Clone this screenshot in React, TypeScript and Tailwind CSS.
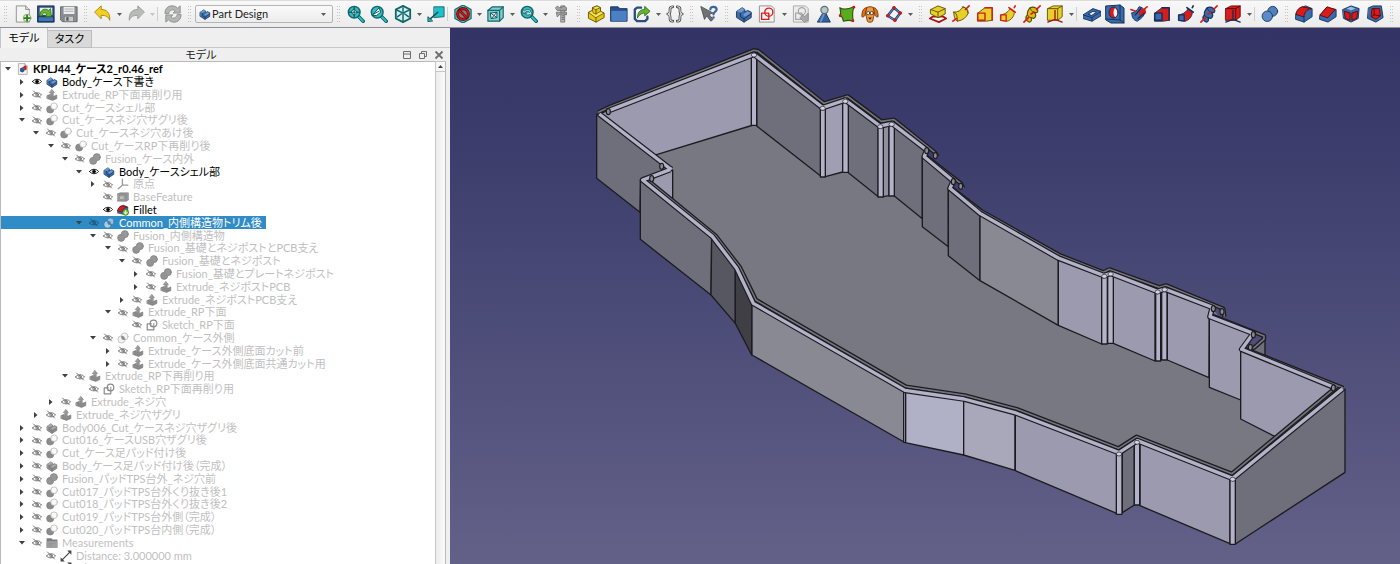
import React, { useState } from 'react';

const INK = '#1c1c20';

/* ---------- toolbar icons ---------- */

const Svg: React.FC<{ children: React.ReactNode; className?: string }> = ({ children, className = 'size-[18px]' }) => (
    <svg className={`shrink-0 ${className}`} viewBox="0 0 20 20" fill="none" strokeLinejoin="round" strokeLinecap="round" aria-hidden="true">
        {children}
    </svg>
);

const Page: React.FC = () => (
    <>
        <path d="M3 1h10l4 4v14H3z" fill="#f4f5f3" stroke="#8a8c88" />
        <path d="M13 1v4h4" fill="#d8d9d6" stroke="#8a8c88" />
    </>
);

const NewIcon = () => (
    <Svg>
        <Page />
        <circle cx="14.5" cy="14.5" r="4.2" fill="#dcebd2" stroke="#5a8a45" strokeWidth=".7" />
        <path d="M14.5 11.5v6M11.5 14.5h6" stroke="#2f7d1c" strokeWidth="2" />
    </Svg>
);

const OpenIcon = () => (
    <Svg>
        <path d="M1 1h18v18H1z" fill="#2a4d80" stroke="#16315a" />
        <path d="M3 3h14v8H3z" fill="#e8ecef" />
        <path d="M1.500 13h17v5.500h-17z" fill="#3f75b5" stroke="#16315a" />
        <path d="M3 12c0-7 6-9 10-6l2-2 1 9H9l2-3C8 7.500 6 9 6 12z" fill="#63b82d" stroke="#2c5e12" strokeWidth=".8" />
    </Svg>
);

const SaveIcon = () => (
    <Svg>
        <path d="M1 2h18v16.500H3L1 17z" fill="#8b8f92" stroke="#5f6366" />
        <path d="M4 2h12v8H4z" fill="#eceded" />
        <path d="M5.500 4.500h9M5.500 7h9" stroke="#a9abad" />
        <path d="M5 12.500h10v6H5z" fill="#c7c9ca" stroke="#6d7073" strokeWidth=".7" />
        <path d="M7 13.500h2.500v4H7z" fill="#55585b" />
    </Svg>
);

const UndoIcon = () => (
    <Svg>
        <path d="M1 7.500 8 1v4c6 0 10 3.500 9.500 12-1.500-4-4-5.500-9.500-5.500v3.500z" fill="#f2cf25" stroke="#a88207" />
    </Svg>
);

const RedoIcon = () => (
    <Svg>
        <path d="M19 7.500 12 1v4C6 5 2 8.500 2.500 17c1.500-4 4-5.500 9.500-5.500v3.500z" fill="#b9bbb9" stroke="#969896" />
    </Svg>
);

const RefreshIcon = () => (
    <Svg>
        <path d="M1 9c0-9 10-10 14-5.500L18 1v8h-8l2.500-2.500C10 4.500 6 5.500 5.500 9z" fill="#b4b6b4" stroke="#8c8e8c" />
        <path d="M19 11c0 9-10 10-14 5.500L2 19v-8h8l-2.500 2.500c2.500 2 6.500 1 7-2.500z" fill="#b4b6b4" stroke="#8c8e8c" />
    </Svg>
);

const Magnifier: React.FC<{ children?: React.ReactNode }> = ({ children }) => (
    <Svg>
        <path d="m12 12 6 6" stroke="#0e5d62" strokeWidth="4" />
        <path d="m12.500 12.500 5.300 5.300" stroke="#22c3cb" strokeWidth="2" />
        <circle cx="8" cy="8" r="6.500" fill="#33bcc3" stroke="#12686c" strokeWidth="1.600" />
        {children}
    </Svg>
);

const FitAllIcon = () => (
    <Magnifier>
        <path d="M8 2.500v11M2.500 8h11" stroke="#0b4b4e" strokeWidth="1.200" />
        <path d="M8 4.500 11.500 8 8 11.500 4.500 8z" fill="#dff7f8" stroke="#0b4b4e" />
        <path d="M8 5v6M5 8h6" stroke="#0b4b4e" />
    </Magnifier>
);

const FitSelectionIcon = () => (
    <Magnifier>
        <path d="m3 11 7-8 2 5-4.500 3.500z" fill="#e6f7f7" stroke="#0b4b4e" />
        <path d="m4 10 6-3" stroke="#0b4b4e" />
    </Magnifier>
);

const ZoomIcon = () => (
    <Magnifier>
        <path d="M3 8.500V5l2 1.500c2-2 5-2 7 0L10.500 8C9 6.500 7 7 6 8l1 1zM13 8v4l-2-1.500c-2 1-4 1-6-1" fill="#c5e9ea" stroke="#0b4b4e" strokeWidth=".8" />
    </Magnifier>
);

const IsoIcon = () => (
    <Svg>
        <path d="m10 1 8 4v10l-8 4-8-4V5z" fill="#d4eeee" stroke="#0f666a" strokeWidth="2" />
        <path d="m2 5 8 4 8-4M10 9v10M10 3v4M4 13l4-3M16 13l-4-3" stroke="#0f666a" strokeWidth="1.600" />
    </Svg>
);

const AlignViewIcon = () => (
    <Svg>
        <path d="M8 2h11v11l-11 1z" fill="#1fc0ca" stroke="#12686c" />
        <path d="m12 8-9 8" stroke="#0d4f53" strokeWidth="1.600" />
        <path d="M1 18v-5l5 4.500z" fill="#1fc0ca" stroke="#0d4f53" />
    </Svg>
);

const NoSignIcon = () => (
    <Svg>
        <path d="m10 0 9 5v10l-9 5-9-5V5z" fill="#5cc4c8" stroke="#12686c" strokeWidth="1.300" />
        <circle cx="10" cy="10" r="6" fill="#7d8282" stroke="#5e0808" strokeWidth="3.400" />
        <circle cx="10" cy="10" r="6" stroke="#c81414" strokeWidth="2" />
        <path d="m6 6 8 8" stroke="#5e0808" strokeWidth="3" />
        <path d="m6 6 8 8" stroke="#d81414" strokeWidth="1.600" />
    </Svg>
);

const BoundIcon = () => (
    <Svg>
        <path d="m1 6 5-4h12v12l-4 4H1z" fill="#82cdd0" stroke="#12686c" strokeWidth="1.300" />
        <path d="M1 6h13v12M14 6l4-4" stroke="#12686c" strokeWidth="1.300" />
        <path d="m4 9 7-1v6l-6 1zM4 9l7 5M11 8l-6 7" fill="#e7f6f6" stroke="#0b4b4e" />
    </Svg>
);

const CaliperIcon = () => (
    <Svg>
        <path d="M9 1h4v18H9z" fill="#b7b9b7" stroke="#6b6d6b" strokeWidth=".9" />
        <path d="M3 3l2-2 2 2h3l2-2 3 2v3H5zM4 8h11v3l-3-1H8l-3 3z" fill="#a1a3a1" stroke="#6b6d6b" strokeWidth=".9" />
        <path d="M10 12h2M10 14h2M10 16h2" stroke="#555" strokeWidth=".8" />
    </Svg>
);

const PartIcon = () => (
    <Svg>
        <path d="M2 8l4-2V3l5-2 4 2v4l4 2v5l-9 5-8-4z" fill="#e5c816" stroke="#5d4f02" />
        <path d="m6 3 5-2 4 2-5 2z" fill="#f7e455" stroke="#5d4f02" strokeWidth=".8" />
        <path d="m2 8 4-2 1 3 3 1 5-3 4 2-9 5z" fill="#f7e455" stroke="#5d4f02" strokeWidth=".8" />
        <path d="M10 5v5M10 14v5" stroke="#5d4f02" />
    </Svg>
);

const FolderIcon = () => (
    <Svg>
        <path d="M1 2h8l2 2h8v14H1z" fill="#28508c" stroke="#1a3765" />
        <path d="M1.500 6.500h17v11.200h-17z" fill="#4b80c2" />
    </Svg>
);

const ShareIcon = () => (
    <Svg>
        <path d="M9 3H4.500L2 5v10.500L4.500 18h9l2.500-2.500V13" stroke="#2b4e80" strokeWidth="2.600" />
        <path d="M5 14c0-7 4-9 8-9V1.500L19 7l-6 5V9c-3 0-5 1-8 5z" fill="#62b82b" stroke="#2c5e12" strokeWidth=".9" />
    </Svg>
);

const BracesIcon = () => (
    <Svg>
        <path d="M7.500 2C4 2 4.500 4 4.500 6.500S4 10 2 10c2 0 2.500 1 2.500 3.500S4 18 7.500 18M12.500 2c3.500 0 3 2 3 4.500s.5 3.500 2.500 3.500c-2 0-2.500 1-2.500 3.500s.5 4.500-3 4.500" stroke="#3b3e40" strokeWidth="3" />
        <path d="M7.500 2C4 2 4.500 4 4.500 6.500S4 10 2 10c2 0 2.500 1 2.500 3.500S4 18 7.500 18M12.500 2c3.500 0 3 2 3 4.500s.5 3.500 2.500 3.500c-2 0-2.500 1-2.500 3.500s.5 4.500-3 4.500" stroke="#e8e8e8" strokeWidth="1.200" />
    </Svg>
);

const WhatsThisIcon = () => (
    <Svg>
        <path d="m1 2 4 14 2.500-4L12 18l2.500-2L10 10.500l4-1.500z" fill="#6f7375" stroke="#4e5153" />
        <path d="M11.500 5c0-4 7-4 7 0 0 2.500-3.500 2.500-3.500 5.500" stroke="#3a669f" strokeWidth="2.400" />
        <circle cx="15" cy="14" r="1.400" fill="#3a669f" />
    </Svg>
);

const BodyShape: React.FC<{ grey?: boolean }> = ({ grey }) => (
    <>
        <path d="m2 7 6-4 3 2v3l3-2 4 2v6l-8 5-8-5z" fill={grey ? '#8e8e8e' : '#3c6ca8'} stroke={grey ? '#707070' : '#122f57'} />
        <path d="m2 7 6-4 3 2-5 3.500zM9 10.500 14 7l4 2-7 4z" fill={grey ? '#acacac' : '#6d9bd2'} />
        <path d="M6 9v4l4 2.500 8-6M10 15v4" stroke={grey ? '#707070' : '#122f57'} />
    </>
);

const BodyIcon = () => <Svg><BodyShape /></Svg>;

const SketchIcon = () => (
    <Svg>
        <path d="M2 1h13l3 3v15H2z" fill="#f4f5f3" stroke="#8a8c88" />
        <path d="M4 9h8v7H4z" stroke="#dc1d1d" strokeWidth="1.500" />
        <circle cx="12" cy="8" r="4.500" stroke="#dc1d1d" strokeWidth="1.500" />
    </Svg>
);

const MapSketchIcon = () => (
    <Svg>
        <path d="M2 1h13l3 3v15H2z" fill="#ececec" stroke="#a5a5a5" />
        <circle cx="11" cy="7" r="4" stroke="#a5a5a5" strokeWidth="1.300" />
        <path d="M4 9h7v7H4z" stroke="#a5a5a5" strokeWidth="1.300" />
        <path d="m9 14 3-3 2 2 4-4v8l-4 2z" fill="#a8a8a8" stroke="#8f8f8f" />
    </Svg>
);

const CloneIcon = () => (
    <Svg>
        <path d="M9 9h3l5 10H3z" fill="#33639f" stroke="#16315a" />
        <path d="M10 10 6.500 18" stroke="#6b97cc" strokeWidth="2" />
        <circle cx="10.500" cy="5.500" r="4" fill="#b9c6c9" stroke="#5e6d73" strokeWidth="1.300" />
    </Svg>
);

const BinderIcon = () => (
    <Svg>
        <path d="M2 3c4 3 9 2 16-1-3 6-2 11-1 16-5-2-8-1-11 0-1-4-1-5-4-6 2-3 1-5 0-9z" fill="#59ac20" stroke="#2a590d" strokeWidth="1.300" />
        <circle cx="17.500" cy="2.500" r="1.600" fill="#d21717" />
        <circle cx="16.500" cy="17.500" r="1.600" fill="#d21717" />
        <circle cx="2.500" cy="12" r="1.600" fill="#d21717" />
    </Svg>
);

const DogIcon = () => (
    <Svg>
        <path d="M6 3c2-1.500 6-1.500 8 0l1 6-1 4-1 5c-1 1.500-5 1.500-6 0l-1-5-1-4z" fill="#f09a3c" stroke="#71370a" />
        <path d="M6 3C2 3 1 8 1 13c2 1 4-1 4-4zM14 3c4 0 5 5 5 10-2 1-4-1-4-4z" fill="#e0730f" stroke="#71370a" />
        <circle cx="8" cy="9" r="1.800" fill="#fff" stroke="#222" strokeWidth=".8" />
        <circle cx="12" cy="9" r="1.800" fill="#fff" stroke="#222" strokeWidth=".8" />
        <path d="M8 14h4l-2 2.500z" fill="#2b1a0c" />
    </Svg>
);

const DatumIcon = () => (
    <Svg>
        <path d="m3 12 7-9 7 6-6 8z" stroke="#17345f" strokeWidth="2.800" />
        <path d="m3 12 7-9 7 6-6 8z" stroke="#5b8bc4" strokeWidth="1.200" />
        {[[3, 12], [10, 3], [17, 9], [11, 17]].map(([x, y]) => <circle key={x} cx={x} cy={y} r="2" fill="#d21717" />)}
    </Svg>
);

const YEL = '#e8cf2a';
const BLU = '#3a6cab';
const RED = '#d81b1b';
const NAVY = '#14305a';

const PadIcon = () => (
    <Svg>
        <path d="m1 15 3-2h12l3 2-8 4z" fill="#fff" stroke="#a31515" strokeWidth="2" />
        <path d="m2 5 8-4 8 3v6l-8 4-8-4z" fill={YEL} stroke="#5d4f02" />
        <path d="m2 5 8 3 8-4M10 8v6" stroke="#5d4f02" />
    </Svg>
);

const RevolutionIcon = () => (
    <Svg>
        <path d="M2 8c5 0 8-2 10-6 4 1 6 3 6 7-2 5-6 8-12 9-3-2-4-5-4-10z" fill={YEL} stroke="#5d4f02" />
        <path d="M2 8c3 1 4 4 4 10M12 2c3 1 5 3 6 7" stroke="#5d4f02" />
        <path d="m1 18 4-3M15 5l4-4" stroke={RED} strokeWidth="1.800" />
    </Svg>
);

const LoftIcon: React.FC<{ sub?: boolean }> = ({ sub }) => (
    <Svg>
        <path d="m2 9 8-6h8v14l-7 1H2z" fill={sub ? RED : YEL} stroke={sub ? NAVY : '#5d4f02'} />
        <path d="M2 9h8v8H2z" fill={sub ? BLU : YEL} stroke={sub ? NAVY : RED} strokeWidth="1.600" />
        <path d="M10 3h8v14" stroke={sub ? NAVY : RED} strokeWidth="1.600" />
    </Svg>
);

const PipeIcon: React.FC<{ sub?: boolean }> = ({ sub }) => (
    <Svg>
        <path d="M2 11C8 10 11 7 12 4l5 4c0 5-4 9-8 10l-7-1z" fill={sub ? RED : YEL} stroke={sub ? NAVY : '#5d4f02'} />
        <path d="M2 11h6v7l-6-1z" fill={sub ? BLU : YEL} stroke={sub ? NAVY : RED} strokeWidth="1.400" />
        <path d="m11 3 7 5M17 3l1-2" stroke={sub ? NAVY : RED} strokeWidth="1.800" />
    </Svg>
);

const HelixIcon: React.FC<{ sub?: boolean }> = ({ sub }) => (
    <Svg>
        <path d="M8 3c4-2 10 1 8 5-1 1-3 0-4 0 3 2 3 5 0 7-1 0-2-1-3-1 1 3 0 5-2 5-4-1-5-6-2-8-1-2 1-6 3-8z" fill={sub ? BLU : '#d9bb14'} stroke={sub ? NAVY : '#5d4f02'} strokeWidth="1.300" />
        <path d="M8 3c0 2 2 4 4 5M5 11c1 2 2 3 4 3" stroke={sub ? NAVY : '#5d4f02'} />
        <path d="m1 19 5-5M9 10l3-2M15 5l4-4" stroke={RED} strokeWidth="1.800" />
    </Svg>
);

const PrimitiveIcon: React.FC<{ sub?: boolean }> = ({ sub }) => (
    <Svg>
        <path d="m2 4 6-3h10v12l-5 4H2z" fill={sub ? RED : YEL} stroke={sub ? '#5e0808' : '#5d4f02'} />
        <path d="M2 4h11v13M13 4l5-3" stroke={sub ? '#5e0808' : '#5d4f02'} />
        <path d="M10 6v10l-8 3M10 16l8 3" stroke={sub ? NAVY : '#a31515'} strokeWidth="1.500" />
    </Svg>
);

const PocketIcon = () => (
    <Svg>
        <path d="m0 11 11-7 9 3v5L10 18 0 15z" fill={BLU} stroke={NAVY} />
        <path d="m0 11 10 3 10-7M10 14v4" stroke={NAVY} />
        <path d="m6 10 5-3 4 1-5 3.500z" fill="#e6eaf0" stroke={NAVY} />
    </Svg>
);

const HoleIcon = () => (
    <Svg className="size-5">
        <path d="m1 2 14-1 4 3v15H6l-5-3z" fill={BLU} stroke={NAVY} />
        <path d="M15 1v15l4 3M15 16 1 15" stroke={NAVY} />
        <ellipse cx="8.500" cy="8.500" rx="4.500" ry="5.500" fill={RED} stroke={NAVY} />
        <path d="M10 4c3 2 3 8 0 9-2-2-2-7 0-9z" fill="#f4f4f4" />
    </Svg>
);

const GrooveIcon = () => (
    <Svg>
        <path d="M2 9c4-1 6-3 8-7 3 0 5 2 7 5-1 5-4 8-9 11-4-1-6-4-6-9z" fill={BLU} stroke={NAVY} />
        <path d="m9 6 8-2 1 5-7 4z" fill={RED} />
        <path d="m6 11 6-7M9 15l7-6" stroke={NAVY} strokeWidth="1.500" />
        <path d="m1 5 5 2M14 6l5-4" stroke={RED} strokeWidth="1.800" />
    </Svg>
);

const BooleanIcon = () => (
    <Svg>
        <circle cx="13" cy="7" r="5.500" fill="#4f80bb" stroke={NAVY} strokeWidth=".9" />
        <circle cx="7" cy="12.500" r="5.800" fill="#5a8bc6" stroke={NAVY} strokeWidth=".9" />
    </Svg>
);

const FilletIcon = () => (
    <Svg>
        <path d="m1 10 5-7 6-2 7 3v9l-9 6-9-3z" fill={BLU} stroke={NAVY} />
        <path d="M1 10c1-5 4-7 7-8l10 2c-5 1-8 5-8 9z" fill={RED} stroke="#5e0808" />
        <path d="M10 13v6" stroke={NAVY} />
    </Svg>
);

const ChamferIcon = () => (
    <Svg>
        <path d="m1 12 7-9 11 2v8l-9 6-9-3z" fill={BLU} stroke={NAVY} />
        <path d="m1 11 8-9 9 3-8 9z" fill={RED} stroke="#5e0808" />
    </Svg>
);

const DraftIcon = () => (
    <Svg>
        <path d="m1 5 9-4 9 3-1 11-8 4-8-4z" fill={BLU} stroke={NAVY} />
        <path d="m3 7 6 2v8l-5-2zM17 7l-6 2v8l5-2z" fill={RED} stroke="#5e0808" />
        <path d="m5 4 5-2 5 2-5 2z" fill="#9cbce0" />
    </Svg>
);

const ThicknessIcon = () => (
    <Svg>
        <path d="m3 3 5-2h9l2 13-8 5-9-4z" fill={BLU} stroke={NAVY} />
        <path d="M7 4h8l1 8-5 4-5-3z" fill={RED} stroke="#5e0808" />
        <path d="M9 4v7l7 1M9 11l-3 2" stroke="#5e0808" />
    </Svg>
);

/* ---------- toolbar ---------- */

const Tool: React.FC<{ label: string; children: React.ReactNode; wide?: boolean }> = ({ label, children, wide }) => (
    <button type="button" aria-label={label} className={`${wide ? 'w-6' : 'w-[23px]'} flex h-6 shrink-0 items-center justify-center rounded-sm hover:bg-black/5`}>
        {children}
    </button>
);

const Handle = () => (
    <div className="flex w-[11px] shrink-0 justify-center gap-px">
        <span className="h-4 w-px bg-[repeating-linear-gradient(#c4c4c4_0_1px,transparent_1px_3px)]" />
        <span className="h-4 w-px bg-[repeating-linear-gradient(#c4c4c4_0_1px,transparent_1px_3px)]" />
    </div>
);

const Arrow: React.FC<{ label: string; faded?: boolean }> = ({ label, faded }) => (
    <button type="button" aria-label={label} className={`flex h-6 w-[10px] shrink-0 items-center justify-center ${faded ? 'text-[#c4c4c4]' : 'text-[#5c5c5c]'}`}>
        <svg className="h-[3px] w-[5px]" viewBox="0 0 5 3" fill="currentColor"><path d="M0 0h5L2.500 3z" /></svg>
    </button>
);

const Sep = () => <div className="mr-[3px] h-[14px] w-px shrink-0 bg-[#cfcfcf]" />;

const Toolbar: React.FC = () => (
    <header className="flex h-7 shrink-0 items-center overflow-hidden border-t border-b border-t-[#dcdcdc] border-b-[#8e8e94] bg-linear-to-b from-[#f8f8f8] to-[#ebebeb]">
        <Handle />
        <Tool label="新規"><NewIcon /></Tool>
        <Tool label="開く"><OpenIcon /></Tool>
        <Tool label="保存"><SaveIcon /></Tool>
        <Handle />
        <Tool label="元に戻す"><UndoIcon /></Tool>
        <Arrow label="元に戻す履歴" />
        <Tool label="やり直す"><RedoIcon /></Tool>
        <Arrow label="やり直す履歴" faded />
        <Sep />
        <Tool label="更新"><RefreshIcon /></Tool>
        <Handle />
        <label className="flex h-[18px] w-[138px] shrink-0 items-center rounded-xs border border-[#b5b5b5] bg-linear-to-b from-[#fafafa] to-[#ececec] px-[3px] hover:border-[#8f8f8f]">
            <Svg className="size-3"><BodyShape /></Svg>
            <select aria-label="ワークベンチ" className="ml-px min-w-0 flex-1 appearance-none bg-transparent text-[11px] leading-4 text-[#222] outline-none" defaultValue="Part Design">
                <option>Part Design</option>
            </select>
            <svg className="mr-[3px] h-[3px] w-[5px] text-[#5c5c5c]" viewBox="0 0 5 3" fill="currentColor"><path d="M0 0h5L2.500 3z" /></svg>
        </label>
        <Handle />
        <Tool label="全てにフィット"><FitAllIcon /></Tool>
        <Tool label="選択にフィット" wide><FitSelectionIcon /></Tool>
        <Tool label="アイソメトリック"><IsoIcon /></Tool>
        <Arrow label="標準ビュー" />
        <Tool label="ビューを整列"><AlignViewIcon /></Tool>
        <Sep />
        <Tool label="描画スタイル"><NoSignIcon /></Tool>
        <Arrow label="描画スタイル一覧" />
        <Tool label="バウンディングボックス"><BoundIcon /></Tool>
        <Arrow label="選択ビュー" />
        <Tool label="ズーム"><ZoomIcon /></Tool>
        <Arrow label="ズーム一覧" />
        <Tool label="計測"><CaliperIcon /></Tool>
        <Handle />
        <Tool label="パーツ"><PartIcon /></Tool>
        <Tool label="グループ"><FolderIcon /></Tool>
        <Tool label="リンク"><ShareIcon /></Tool>
        <Arrow label="リンク操作" />
        <Tool label="変数"><BracesIcon /></Tool>
        <Handle />
        <Tool label="これは何？" wide><WhatsThisIcon /></Tool>
        <Handle />
        <Tool label="ボディー"><BodyIcon /></Tool>
        <Tool label="スケッチ" wide><SketchIcon /></Tool>
        <Arrow label="スケッチ操作" />
        <Tool label="スケッチをマップ"><MapSketchIcon /></Tool>
        <Tool label="クローン"><CloneIcon /></Tool>
        <Tool label="サブシェイプバインダー"><BinderIcon /></Tool>
        <Tool label="形状バインダー" wide><DogIcon /></Tool>
        <Tool label="データム"><DatumIcon /></Tool>
        <Arrow label="データム一覧" />
        <Handle />
        <Tool label="パッド"><PadIcon /></Tool>
        <Tool label="レボリューション" wide><RevolutionIcon /></Tool>
        <Tool label="加算ロフト"><LoftIcon /></Tool>
        <Tool label="加算パイプ" wide><PipeIcon /></Tool>
        <Tool label="加算らせん"><HelixIcon /></Tool>
        <Tool label="加算プリミティブ"><PrimitiveIcon /></Tool>
        <Arrow label="加算プリミティブ一覧" />
        <Sep />
        <Tool label="ポケット"><PocketIcon /></Tool>
        <Tool label="ホール" wide><HoleIcon /></Tool>
        <Tool label="グルーブ"><GrooveIcon /></Tool>
        <Tool label="減算ロフト" wide><LoftIcon sub /></Tool>
        <Tool label="減算パイプ"><PipeIcon sub /></Tool>
        <Tool label="減算らせん" wide><HelixIcon sub /></Tool>
        <Tool label="減算プリミティブ"><PrimitiveIcon sub /></Tool>
        <Arrow label="減算プリミティブ一覧" />
        <Sep />
        <Tool label="ブーリアン"><BooleanIcon /></Tool>
        <Handle />
        <Tool label="フィレット" wide><FilletIcon /></Tool>
        <Tool label="面取り"><ChamferIcon /></Tool>
        <Tool label="抜き勾配" wide><DraftIcon /></Tool>
        <Tool label="厚み"><ThicknessIcon /></Tool>
        <Handle />
        <Tool label="鏡像"><BodyIcon /></Tool>
    </header>
);

/* ---------- model tree ---------- */

type Kind = 'doc' | 'body' | 'extrude' | 'cut' | 'fusion' | 'common' | 'origin' | 'base' | 'fillet' | 'sketch' | 'group' | 'measure';
type Node = { level: number; kind: Kind; name: string; state: 'open' | 'closed' | 'leaf'; shown?: boolean };

const n = (level: number, kind: Kind, name: string, state: Node['state'] = 'closed', shown = false): Node => ({ level, kind, name, state, shown });

const NODES: Node[] = [
    n(0, 'doc', 'KPLJ44_ケース2_r0.46_ref', 'open', true),
    n(1, 'body', 'Body_ケース下書き', 'closed', true),
    n(1, 'extrude', 'Extrude_RP下面再削り用'),
    n(1, 'cut', 'Cut_ケースシェル部'),
    n(1, 'cut', 'Cut_ケースネジ穴ザグリ後', 'open'),
    n(2, 'cut', 'Cut_ケースネジ穴あけ後', 'open'),
    n(3, 'cut', 'Cut_ケースRP下再削り後', 'open'),
    n(4, 'fusion', 'Fusion_ケース内外', 'open'),
    n(5, 'body', 'Body_ケースシェル部', 'open', true),
    n(6, 'origin', '原点'),
    n(6, 'base', 'BaseFeature', 'leaf'),
    n(6, 'fillet', 'Fillet', 'leaf', true),
    n(5, 'common', 'Common_内側構造物トリム後', 'open'),
    n(6, 'fusion', 'Fusion_内側構造物', 'open'),
    n(7, 'fusion', 'Fusion_基礎とネジポストとPCB支え', 'open'),
    n(8, 'fusion', 'Fusion_基礎とネジポスト', 'open'),
    n(9, 'fusion', 'Fusion_基礎とプレートネジポスト'),
    n(9, 'extrude', 'Extrude_ネジポストPCB'),
    n(8, 'extrude', 'Extrude_ネジポストPCB支え'),
    n(7, 'extrude', 'Extrude_RP下面', 'open'),
    n(8, 'sketch', 'Sketch_RP下面', 'leaf'),
    n(6, 'common', 'Common_ケース外側', 'open'),
    n(7, 'extrude', 'Extrude_ケース外側底面カット前'),
    n(7, 'extrude', 'Extrude_ケース外側底面共通カット用'),
    n(4, 'extrude', 'Extrude_RP下再削り用', 'open'),
    n(5, 'sketch', 'Sketch_RP下面再削り用', 'leaf'),
    n(3, 'extrude', 'Extrude_ネジ穴'),
    n(2, 'extrude', 'Extrude_ネジ穴ザグリ'),
    n(1, 'body', 'Body006_Cut_ケースネジ穴ザグリ後'),
    n(1, 'cut', 'Cut016_ケースUSB穴ザグリ後'),
    n(1, 'cut', 'Cut_ケース足パッド付け後'),
    n(1, 'body', 'Body_ケース足パッド付け後（完成）'),
    n(1, 'fusion', 'Fusion_パッドTPS台外_ネジ穴前'),
    n(1, 'cut', 'Cut017_パッドTPS台外くり抜き後1'),
    n(1, 'cut', 'Cut018_パッドTPS台外くり抜き後2'),
    n(1, 'cut', 'Cut019_パッドTPS台外側（完成）'),
    n(1, 'cut', 'Cut020_パッドTPS台内側（完成）'),
    n(1, 'group', 'Measurements', 'open'),
    n(2, 'measure', 'Distance: 3.000000 mm', 'leaf'),
    n(2, 'measure', 'Distance001: 3.000000 mm', 'leaf'),
];

const INDENT = ['pl-0', 'pl-[14px]', 'pl-[28px]', 'pl-[43px]', 'pl-[57px]', 'pl-[71px]', 'pl-[85px]', 'pl-[100px]', 'pl-[114px]', 'pl-[128px]'];

const KindIcon: React.FC<{ kind: Kind; shown?: boolean; selected?: boolean }> = ({ kind, shown, selected }) => {
    switch (kind) {
        case 'doc':
            return (
                <>
                    <Page />
                    <path d="m5 9 4-2 3 2v5l-3 2-4-2z" fill="#2d5b98" />
                    <path d="m9 7 5-3 2 2v5l-4 2V9z" fill="#c41b1b" />
                </>
            );
        case 'body':
            return <BodyShape grey={!shown} />;
        case 'extrude':
            return (
                <>
                    <path d="m2 11 5-2v3l4 1 7-3v6l-7 3-9-3z" fill="#8b8b8b" stroke="#737373" />
                    <path d="m10 1 4 5h-2v6H8V6H6z" fill="#9b9b9b" stroke="#737373" />
                </>
            );
        case 'cut':
            return (
                <>
                    <circle cx="7" cy="12.500" r="6" fill="#8c8c8c" stroke="#777" />
                    <circle cx="13.500" cy="7" r="5.500" fill="#fafafa" stroke="#b0b0b0" strokeWidth="1.200" />
                </>
            );
        case 'fusion':
            return (
                <>
                    <circle cx="13" cy="7" r="6" fill="#989898" stroke="#7b7b7b" />
                    <circle cx="7" cy="13" r="6" fill="#949494" />
                    <path d="M7 7A6 6 0 1 0 13 13" stroke="#7b7b7b" />
                </>
            );
        case 'common':
            return (
                <>
                    <circle cx="12.500" cy="7.500" r="6" fill={selected ? '#8fbfe2' : '#f3f3f3'} stroke={selected ? '#3b6f98' : '#a8a8a8'} />
                    <circle cx="7.500" cy="12.500" r="6" fill={selected ? '#a9cde8' : '#f3f3f3'} stroke={selected ? '#3b6f98' : '#a8a8a8'} />
                    <path d="M7 7c3-1 6 2 6.200 6C9 14 6.500 11 7 7z" fill={selected ? '#4c7fa8' : '#8a8a8a'} />
                </>
            );
        case 'origin':
            return <path d="M9 2v10h9M9 12l-7 6" stroke="#9a9a9a" strokeWidth="2.200" />;
        case 'base':
            return (
                <>
                    <path d="m1 5 4-2h14v12l-4 2H1z" fill="#999" stroke="#808080" />
                    <path d="M1 5h14v12" stroke="#808080" />
                    <path d="M5 9h6v4H5z" fill="#c2c2c2" />
                </>
            );
        case 'fillet':
            return (
                <>
                    <path d="m1 11 4-7 6-2 7 3v7l-8 5-9-2z" fill={BLU} stroke={NAVY} />
                    <path d="M1 11c1-5 4-7 8-8l8 2c-5 1-8 4-8 8z" fill={RED} stroke="#5e0808" />
                    <circle cx="14.500" cy="14" r="5" fill="#6cc233" stroke="#3a7a16" />
                    <path d="M14.500 11v5M12 14l2.500 3 2.500-3" stroke="#fff" strokeWidth="1.600" />
                </>
            );
        case 'sketch':
            return (
                <>
                    <path d="M9 8H2v10h11v-6" stroke="#8b8b8b" strokeWidth="2" />
                    <circle cx="12.500" cy="7.500" r="5.500" stroke="#8b8b8b" strokeWidth="2" />
                    <path d="M8 12h5V7" stroke="#8b8b8b" strokeWidth="1.600" />
                </>
            );
        case 'group':
            return (
                <>
                    <path d="M1 2h8l2 2h8v14H1z" fill="#7d7d7d" />
                    <path d="M1 7h18v11H1z" fill="#9f9f9f" />
                    <path d="M5 11h3M10 11h4M5 14h5" stroke="#888" />
                </>
            );
        case 'measure':
            return (
                <>
                    <path d="M4 16 16 4" stroke="#444" strokeWidth="2" />
                    <path d="M1 19v-7l7 7zM19 1v7l-7-7z" fill="#444" />
                </>
            );
    }
};

const Eye: React.FC<{ shown?: boolean }> = ({ shown }) => (
    <svg className="h-[9px] w-[10px]" viewBox="0 0 20 18" fill="none" stroke="currentColor" strokeLinecap="round">
        {shown ? (
            <>
                <path d="M1 9c4-6 14-6 18 0-4 6-14 6-18 0z" strokeWidth="1.800" />
                <circle cx="10" cy="9" r="3.200" fill="currentColor" />
            </>
        ) : (
            <>
                <path d="M1 10c4-6 14-6 18 0-4 5-14 5-18 0z" strokeWidth="1.800" />
                <circle cx="10" cy="9.500" r="2.600" strokeWidth="1.600" />
                <path d="m3 2 14 14" strokeWidth="1.800" />
            </>
        )}
    </svg>
);

const TreeRow: React.FC<{ node: Node; selected: boolean; onSelect: () => void }> = ({ node, selected, onSelect }) => {
    const tone = selected ? 'text-white' : node.shown ? 'text-black' : 'text-[#bfbfbf]';
    return (
        <li
            role="treeitem"
            aria-selected={selected}
            onClick={onSelect}
            className={`flex h-[13px] w-fit items-center whitespace-nowrap pr-1 nth-[5n]:h-3 ${INDENT[node.level]} ${selected ? 'bg-[#308cc6]' : ''}`}
        >
            <span className="flex w-[14px] shrink-0 justify-center text-[#404040]">
                {node.state === 'open' && <svg className="h-1 w-[6px]" viewBox="0 0 6 4" fill="currentColor"><path d="M0 0h6L3 3.500z" /></svg>}
                {node.state === 'closed' && <svg className="h-[6px] w-1" viewBox="0 0 4 6" fill="currentColor"><path d="M0 0v6l3.500-3z" /></svg>}
            </span>
            {node.kind !== 'doc' && (
                <button type="button" aria-label="表示切り替え" className={`flex w-[15px] shrink-0 justify-center ${selected ? 'text-[#1d4f73]' : node.shown ? 'text-black' : 'text-[#666]'}`}>
                    <Eye shown={node.shown} />
                </button>
            )}
            <span className="flex w-[15px] shrink-0 justify-center">
                <Svg className="size-3"><KindIcon kind={node.kind} shown={node.shown} selected={selected} /></Svg>
            </span>
            <span className={`pl-[3px] ${node.kind === 'doc' ? 'font-bold' : ''} ${tone}`}>{node.name}</span>
        </li>
    );
};

const Sidebar: React.FC = () => {
    const [selected, setSelected] = useState(12);

    return (
        <aside className="flex w-[450px] shrink-0 flex-col bg-[#efefef]">
            <div role="tablist" className="flex h-5 shrink-0 items-end">
                <button type="button" role="tab" aria-selected="true" className="h-5 w-12 border-r border-l border-[#c4c4c4] bg-[#f3f3f3] text-[11px] leading-5">モデル</button>
                <button type="button" role="tab" aria-selected="false" className="h-[18px] w-11 border-t border-r border-b border-[#bdbdbd] bg-[#d9d9d9] text-[11px] leading-4">タスク</button>
                <div className="flex-1 self-stretch border-b border-[#c8c8c8]" />
            </div>
            <div className="flex h-[13px] shrink-0 items-center pr-[6px]">
                <h2 className="flex-1 text-center text-[11px] leading-3 text-[#222]">モデル</h2>
                <div className="flex gap-[6px] text-[#6e6e6e]">
                    <button type="button" aria-label="折りたたむ"><svg className="size-[10px]" viewBox="0 0 10 10" fill="none" stroke="currentColor"><path d="M1.500 1.500h7v7h-7zM1.500 4h7" /></svg></button>
                    <button type="button" aria-label="フロート"><svg className="size-[10px]" viewBox="0 0 10 10" fill="none" stroke="currentColor"><path d="M3.500 3.500v-2h5v5h-2M1.500 3.500h5v5h-5z" /></svg></button>
                    <button type="button" aria-label="閉じる"><svg className="size-[10px]" viewBox="0 0 10 10" fill="none" stroke="currentColor" strokeWidth="1.800"><path d="m1.500 1.500 7 7M8.500 1.500l-7 7" /></svg></button>
                </div>
            </div>
            <div className="mr-1 flex min-h-0 flex-1 border-r border-l border-[#bababa] bg-white">
                <ul role="tree" className="min-w-0 flex-1 overflow-hidden border-t border-[#bababa] text-[11px] leading-3">
                    {NODES.map((node, i) => (
                        <TreeRow key={i} node={node} selected={selected === i} onSelect={() => setSelected(i)} />
                    ))}
                </ul>
                <div className="flex w-[10px] shrink-0 flex-col border-t border-l border-[#c6c6c6] bg-linear-to-r from-[#ececec] to-[#fafafa]">
                    <button type="button" aria-label="上へ" className="flex h-[10px] items-center justify-center border-b border-[#c6c6c6] bg-[#f7f7f7] text-[#444]">
                        <svg className="h-[3px] w-[5px]" viewBox="0 0 5 3" fill="currentColor"><path d="M0 3h5L2.500 0z" /></svg>
                    </button>
                    <div className="flex-1" />
                </div>
            </div>
        </aside>
    );
};

/* ---------- 3D view ---------- */

const DARK = '#6f6f7b';
const LIGHT = '#9c9aae';

const WALLS_BACK: [string, string][] = [
    ['28,222 490,45 490,255 190,347', LIGHT],
    ['500,50 692,203 692,408 500,258', DARK],
    ['706,205 758,187 758,396 706,410', '#a09eb2'],
    ['775,185 865,258 865,470 775,398', DARK],
    ['880,262 897,256 897,467 880,470', '#8f8fa0'],
    ['913,258 1010,335 997,350 997,536 913,468', DARK],
    ['997,350 1090,425 1075,445 1075,620 997,560', DARK],
    ['1075,445 1170,520 1170,722 1075,647', DARK],
    ['1170,520 1405,656 1405,856 1170,722', '#898994'],
    ['1405,656 1535,705 1535,912 1405,856', LIGHT],
    ['1570,702 1695,755 1695,963 1570,910', LIGHT],
    ['1732,750 1867,802 1858,832 1857,1013 1732,960', LIGHT],
    ['1858,832 1990,880 1952,930 1952,1080 1858,1042', LIGHT],
    ['1990,925 2025,893 2025,945 1990,940', DARK],
    ['1952,930 2240,1050 2067,1196 1952,1137', LIGHT],
    ['165,420 248,390 248,492', LIGHT],
];

const WALLS_FRONT: [string, string][] = [
    ['20,222 235,390 152,420 150,517 20,415', DARK],
    ['151,420 365,595 363,765 151,598', DARK],
    ['365,595 436,685 436,850 363,765', '#575761'],
    ['436,685 487,790 485,945 436,850', '#3f3f45'],
    ['486,790 942,1050 942,1206 486,945', '#898994'],
    ['946,1050 1121,1077 1121,1245 946,1208', '#b0b0c6'],
    ['1121,1077 1275,1120 1275,1291 1121,1245', '#a8a8ba'],
    ['1276,1120 1580,1238 1580,1420 1276,1292', LIGHT],
    ['1597,1240 1633,1208 1633,1395 1597,1418', DARK],
    ['1650,1205 1920,1315 1920,1511 1650,1397', LIGHT],
    ['1936,1316 2265,1047 2265,1297 1936,1512', DARK],
];

// rounded vertical corners: x, width, top, bottom
const PILLARS_BACK = [
    [484, 16, 45, 256], [691, 15, 205, 411], [758, 17, 185, 397], [864, 16, 262, 471], [897, 16, 254, 468],
    [1535, 17, 708, 912], [1553, 17, 702, 910], [1697, 15, 755, 963], [1715, 16, 748, 960],
];
const PILLARS_FRONT = [[941, 6, 1050, 1207], [1579, 17, 1240, 1423], [1633, 16, 1205, 1395], [1920, 16, 1318, 1513]];

const RIM_BACK = 'M50,214 492,43 698,203 766,180 870,258 906,250 1010,330 1003,350 1090,423 1080,445 1170,520 1405,654 1542,707 1562,700 1702,754 1724,747 1867,802 1860,830 1990,880 1955,928 2232,1042';
const RIM_FRONT = 'M28,222 235,382 245,388 M240,389 158,420 368,590 440,685 490,790 945,1051 1122,1077 1275,1118 1587,1238 1642,1202 1928,1315 2258,1046';
const EDGE_BACK = 'M25,217 60,200 492,31 504,33 702,190 773,169 874,244 912,239 1035,338 1042,350 M1003,345 1112,430 1120,445 M1085,445 1175,514 1408,645 1540,697 1558,688 1708,742 1728,736 1900,806 1903,830 M1862,825 2022,888 2022,897 1990,925 M1960,925 2260,1044';
const EDGE_FRONT = 'M165,414 376,586 450,682 498,780 948,1040 1124,1066 1280,1107 1585,1225 1640,1190 1926,1301 2240,1040';

const Rim: React.FC<{ edge: string; rim: string }> = ({ edge, rim }) => (
    <g fill="none" strokeLinejoin="round">
        <path d={edge} stroke={INK} strokeWidth="13" />
        <path d={edge} stroke="#74747f" strokeWidth="5" />
        <path d={rim} stroke={INK} strokeWidth="17" />
        <path d={rim} stroke="#b3b2c8" strokeWidth="10" />
    </g>
);

const Walls: React.FC<{ walls: [string, string][]; pillars: number[][] }> = ({ walls, pillars }) => (
    <g stroke={INK} strokeWidth="4" strokeLinejoin="round">
        {walls.map(([points, fill]) => <polygon key={points} points={points} fill={fill} />)}
        {pillars.map(([x, w, top, bottom]) => <rect key={x} x={x} y={top} width={w} height={bottom - top} fill="#b3b2c8" />)}
    </g>
);

const Viewport: React.FC = () => (
    <main className="min-w-0 flex-1 bg-linear-to-b from-[#333365] to-[#636188]">
        <svg className="h-full w-full" viewBox="-420 -36 2850 1608" preserveAspectRatio="xMidYMid meet" role="img" aria-label="Fillet">
            <polygon
                fill="#787882"
                points="190,338 490,50 700,200 900,260 1075,440 1170,520 1405,656 1867,802 1952,930 2235,1047 1930,1310 1640,1200 1587,1238 1275,1120 945,1050 490,790 365,590 240,480 240,385"
            />
            <Walls walls={WALLS_BACK} pillars={PILLARS_BACK} />
            <Rim edge={EDGE_BACK} rim={RIM_BACK} />
            <Walls walls={WALLS_FRONT} pillars={PILLARS_FRONT} />
            <Rim edge={EDGE_FRONT} rim={RIM_FRONT} />
            <g fill="#8b8b98" stroke={INK} strokeWidth="3.500">
                {[[55, 215], [215, 379], [185, 416], [1010, 332], [1036, 347], [1090, 425], [1112, 439], [1870, 806], [1896, 815], [1990, 884], [1981, 922], [2230, 1044]].map(([x, y]) => (
                    <ellipse key={x} cx={x} cy={y} rx="6" ry="9" />
                ))}
            </g>
            <g fill="#d3d2e4" stroke={INK} strokeWidth="2">
                {[[492, 45], [698, 205], [766, 184], [871, 260], [905, 253], [1543, 709], [1562, 702], [1703, 756], [1724, 749], [1587, 1242], [1641, 1207], [1928, 1318]].map(([x, y]) => (
                    <ellipse key={x} cx={x} cy={y} rx="8" ry="6" />
                ))}
            </g>
        </svg>
    </main>
);

export default function App() {
    return (
        <div className="flex h-screen flex-col overflow-hidden font-['Lato','Noto_Sans_CJK_JP',sans-serif] text-[11px] text-black [font-feature-settings:'palt']">
            <Toolbar />
            <div className="flex min-h-0 flex-1">
                <Sidebar />
                <Viewport />
            </div>
        </div>
    );
}
